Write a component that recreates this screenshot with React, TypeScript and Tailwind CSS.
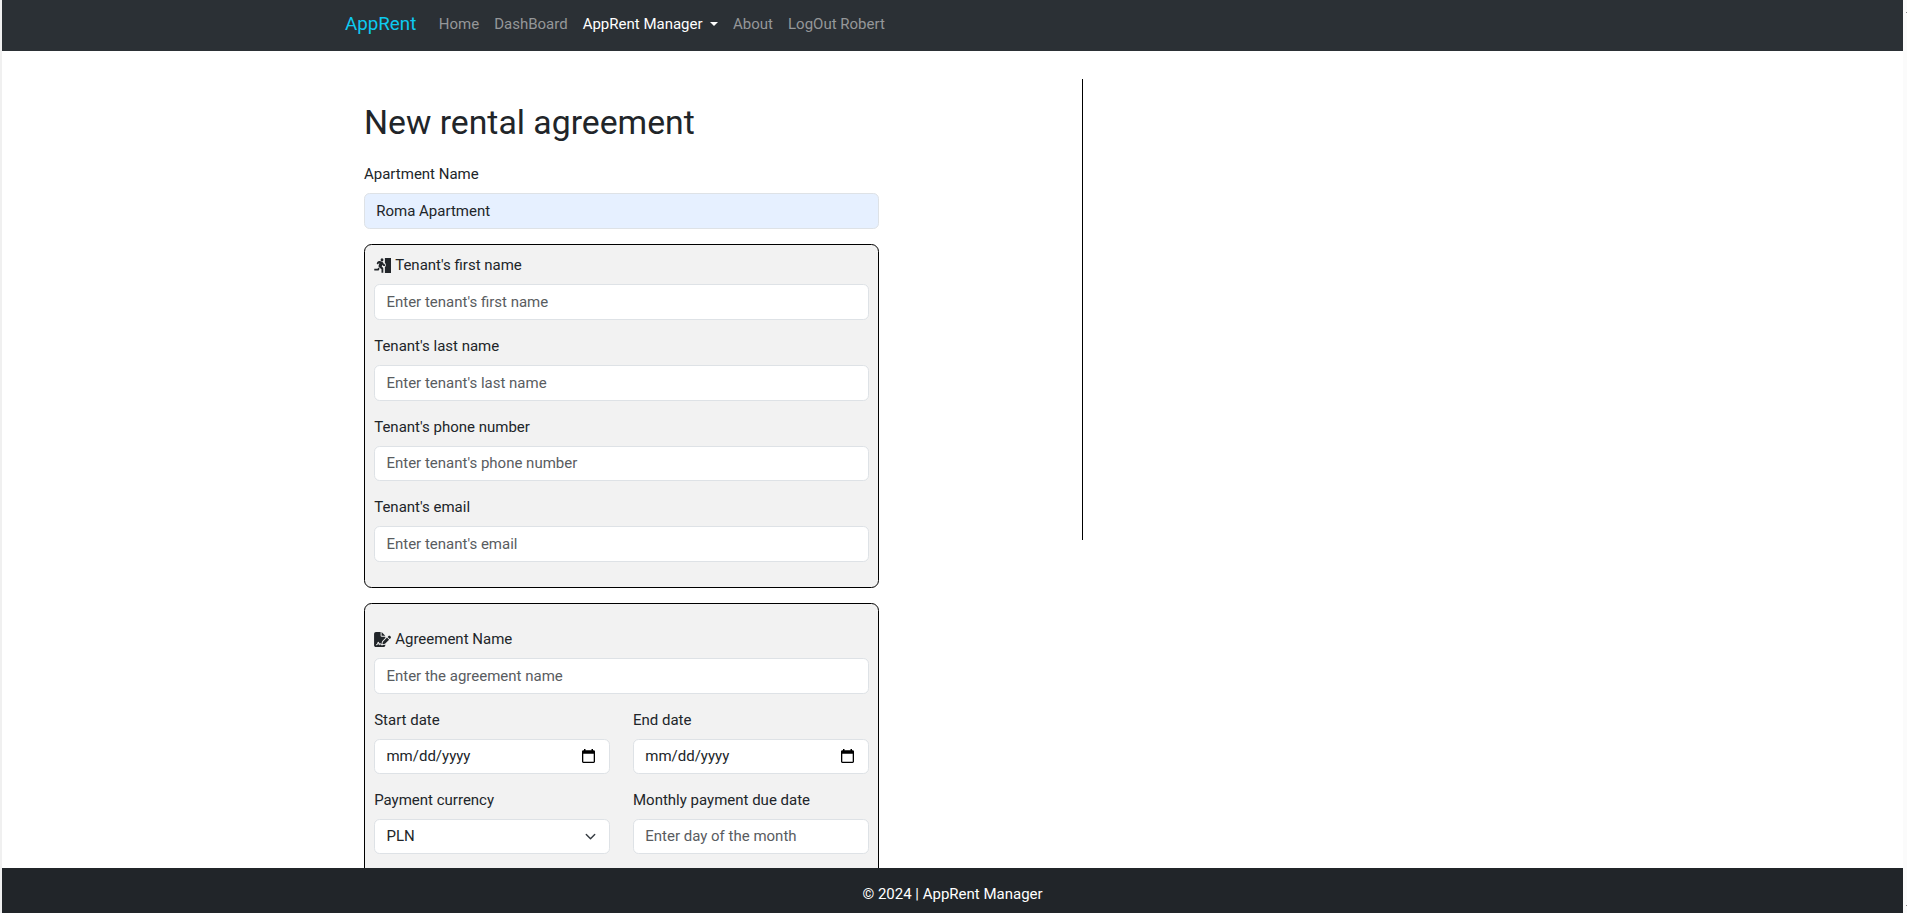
import { FaFileSignature } from 'react-icons/fa6';
import type { ReactNode } from 'react';

const base =
  'w-full rounded-[5.6px] border border-[#dee2e6] px-[11.25px] text-[15px] leading-[22.5px] text-[#212529] placeholder:text-[#595c5f] placeholder:opacity-100 outline-none';
const control = base + ' block h-[35.625px] bg-white';

function Field({ label, icon, children }: { label: string; icon?: ReactNode; children: ReactNode }) {
  return (
    <div className="mb-[15px]">
      <label className="mb-[7.5px] flex h-[22.5px] items-center gap-[4px]">
        {icon}
        <span>{label}</span>
      </label>
      {children}
    </div>
  );
}

function LeaveIcon() {
  return (
    <svg viewBox="0 0 640 512" className="h-[15px] w-[17px]" fill="currentColor" preserveAspectRatio="none">
      <circle cx="302" cy="62" r="54" />
      <path d="M126 138 C160 94 212 100 250 114 L316 138 C338 146 350 164 358 182 L376 212 H414 V270 H362 C346 270 334 264 326 250 L316 230 L290 290 L332 326 C344 338 350 350 350 366 V504 H282 V386 L192 318 C170 302 164 276 174 252 L204 178 C194 172 184 176 178 184 L146 226 L100 190 Z" />
      <path d="M164 326 L212 364 L186 410 C176 424 164 430 148 430 H10 V364 H134 Z" />
      <path d="M410 0 H640 V512 H410 V294 H442 V188 H410 Z" />
    </svg>
  );
}

function DateBox() {
  return (
    <div className={base + ' flex h-[34.7px] items-center justify-between bg-white'}>
      <span>mm/dd/yyyy</span>
      <svg viewBox="0 0 13 14" className="mr-[2.5px] h-[14px] w-[13px] text-black" fill="currentColor">
        <path d="M2 0h1.5v1.3h6V0H11v1.3h.7c.7 0 1.3.6 1.3 1.3v10c0 .8-.6 1.4-1.3 1.4H1.3C.6 14 0 13.4 0 12.6v-10C0 1.9.6 1.3 1.3 1.3H2V0zM1.3 4.7v8h10.4v-8H1.3z" />
      </svg>
    </div>
  );
}

export default function App() {
  return (
    <div className="flex h-[913px] w-full overflow-hidden bg-[#fbfbfb] font-[Roboto,sans-serif] text-[15px] leading-[22.5px] text-[#212529]">
      <div className="w-[2px] shrink-0 bg-[#f0f0f0]" />
      <div className="flex w-[1901px] shrink-0 flex-col bg-white">
        <nav className="flex h-[51px] shrink-0 items-start bg-[#2b3035] pl-[343px] pt-[9px] text-[#959799]">
          <a className="mr-[15px] pt-px text-[18.75px] leading-[28px] text-[#0dcaf0]">AppRent</a>
          <div className="flex pt-[4px]">
            <a className="px-[7.5px]">Home</a>
            <a className="px-[7.5px]">DashBoard</a>
            <a className="flex items-center px-[7.5px] text-white">
              AppRent Manager
              <span className="ml-[7px] mr-[0.5px] border-x-[4px] border-t-[4px] border-x-transparent border-t-white" />
            </a>
            <a className="px-[7.5px]">About</a>
            <a className="px-[7.5px]">LogOut Robert</a>
          </div>
        </nav>
        <main className="flex min-h-0 flex-1 overflow-hidden">
          <form className="ml-[362px] w-[515px] shrink-0 pt-[49.2px]">
            <h1 className="mb-[18px] text-[33.75px] leading-[45px]">New rental agreement</h1>
            <Field label="Apartment Name">
              <input className={base + ' block h-[35.625px] bg-[#e6f0ff]'} defaultValue="Roma Apartment" />
            </Field>
            <section className="mb-[15px] rounded-[7.5px] border border-black bg-[#f2f2f2] px-[9.2px] pb-[10px] pt-[9.6px]">
              <Field label="Tenant's first name" icon={<LeaveIcon />}>
                <input className={control} placeholder="Enter tenant's first name" />
              </Field>
              <Field label="Tenant's last name">
                <input className={control} placeholder="Enter tenant's last name" />
              </Field>
              <Field label="Tenant's phone number">
                <input className={control} placeholder="Enter tenant's phone number" />
              </Field>
              <Field label="Tenant's email">
                <input className={control} placeholder="Enter tenant's email" />
              </Field>
            </section>
            <section className="rounded-[7.5px] border border-black bg-[#f2f2f2] px-[9.2px] pb-[9.375px] pt-[24.375px]">
              <Field label="Agreement Name" icon={<FaFileSignature className="h-[15px] w-[17px]" />}>
                <input className={control} placeholder="Enter the agreement name" />
              </Field>
              <div className="grid grid-cols-2 gap-x-[23px]">
                <Field label="Start date">
                  <DateBox />
                </Field>
                <Field label="End date">
                  <DateBox />
                </Field>
                <Field label="Payment currency">
                  <div className={base + ' flex h-[35.625px] items-center justify-between bg-white'}>
                    <span>PLN</span>
                    <svg viewBox="0 0 16 16" className="h-[11.25px] w-[15px]" fill="none" stroke="#343a40" strokeWidth="2" strokeLinecap="round" strokeLinejoin="round">
                      <path d="m2 5 6 6 6-6" />
                    </svg>
                  </div>
                </Field>
                <Field label="Monthly payment due date">
                  <input className={control} placeholder="Enter day of the month" />
                </Field>
              </div>
            </section>
          </form>
          <div className="ml-[203px] mt-[28px] h-[461px] w-px bg-black" />
        </main>
        <footer className="flex h-[45px] shrink-0 items-center justify-center bg-[#212529] pt-[7px] text-white">
          © 2024 | AppRent Manager
        </footer>
      </div>
      <div className="flex flex-1 flex-col items-end justify-between pb-[7px] pt-[12px]">
        <span className="size-px bg-[#8b8b8b]" />
        <span className="size-px bg-[#8b8b8b]" />
      </div>
    </div>
  );
}
